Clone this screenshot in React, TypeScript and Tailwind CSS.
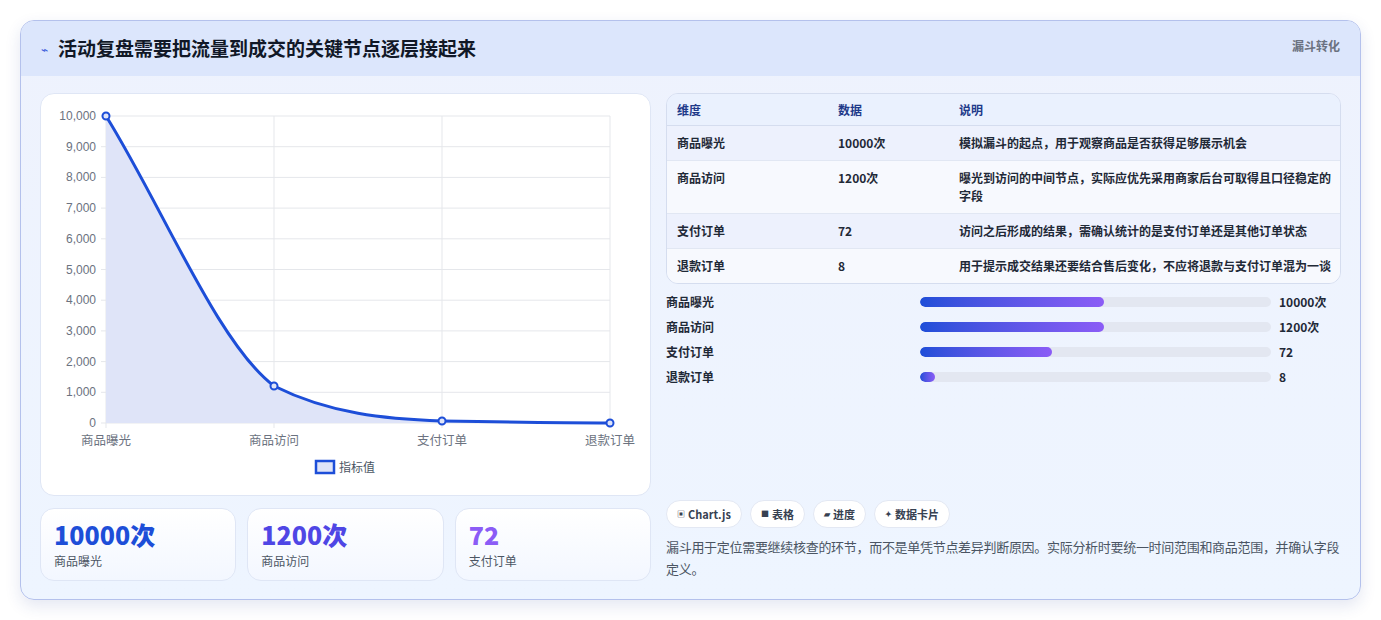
import React from "react";

const F = { fontFamily: '"Noto Sans CJK SC", "Noto Sans", sans-serif' };

const rows = [
  ["商品曝光", "10000次", "模拟漏斗的起点，用于观察商品是否获得足够展示机会"],
  ["商品访问", "1200次", "曝光到访问的中间节点，实际应优先采用商家后台可取得且口径稳定的字段"],
  ["支付订单", "72", "访问之后形成的结果，需确认统计的是支付订单还是其他订单状态"],
  ["退款订单", "8", "用于提示成交结果还要结合售后变化，不应将退款与支付订单混为一谈"],
];
const bars = [
  ["商品曝光", 52.5, "10000次"],
  ["商品访问", 52.5, "1200次"],
  ["支付订单", 37.6, "72"],
  ["退款订单", 4.2, "8"],
] as const;

function Chart() {
  const yl = ["10,000", "9,000", "8,000", "7,000", "6,000", "5,000", "4,000", "3,000", "2,000", "1,000", "0"];
  const top = 22, bot = 329, step = (bot - top) / 10;
  const xs = [65, 233, 401, 569];
  const xl = ["商品曝光", "商品访问", "支付订单", "退款订单"];
  const curve = "M65,22 C121,112 177,250 233,292 C289,320 345,325 401,327 C457,328 513,329 569,329";
  return (
    <svg width="610" height="402" className="block" style={F}>
      {yl.map((t, i) => (
        <g key={t}>
          <line x1={60} x2={569} y1={top + i * step} y2={top + i * step} stroke="#e5e7eb" />
          <text x={55} y={top + i * step + 4} textAnchor="end" fontSize="12" fill="#6b7280" fontFamily="Liberation Sans, sans-serif">{t}</text>
        </g>
      ))}
      {xs.map((x, i) => (
        <g key={x}>
          <line x1={x} x2={x} y1={top} y2={bot + 5} stroke="#e5e7eb" />
          <text x={x} y={351} textAnchor="middle" fontSize="12.5" fill="#6b7280">{xl[i]}</text>
        </g>
      ))}
      <path d={curve + " L569,329 L65,329 Z"} fill="#dfe4f8" />
      <path d={curve} fill="none" stroke="#1d4ed8" strokeWidth="3" />
      {[[65, 22], [233, 292], [401, 327], [569, 329]].map(([x, y]) => (
        <circle key={x} cx={x} cy={y} r="3.5" fill="#dfe4f8" stroke="#1d4ed8" strokeWidth="2" />
      ))}
      <rect x={275} y={367} width={18} height={12} fill="#dfe4f8" stroke="#1d4ed8" strokeWidth="2.5" />
      <text x={298} y={378} fontSize="12" fill="#4b5563">指标值</text>
    </svg>
  );
}

export default function App() {
  return (
    <div className="w-[1381px] h-[620px] bg-white pt-[20px] pl-[20px]" style={F}>
      <div className="w-[1341px] h-[580px] rounded-[14px] border border-[#b4c1ec] bg-gradient-to-b from-[#eef2fd] to-[#eef5ff] overflow-hidden shadow-[0_6px_16px_rgba(30,60,150,0.12)]">
        <div className="h-[55px] bg-[#dce6fc] flex items-center justify-between pl-[20px] pr-[20px]">
          <div className="flex items-center gap-[10px]">
            <span className="text-[#3b5bdb] text-[12px]">⌁</span>
            <span className="text-[19px] font-bold text-[#111827]">活动复盘需要把流量到成交的关键节点逐层接起来</span>
          </div>
          <span className="text-[12px] font-bold text-[#6b7280] self-start mt-[16px]">漏斗转化</span>
        </div>
        <div className="flex gap-[15px] px-[19px] pt-[17px]">
          <div className="w-[611px] flex flex-col gap-[12px]">
            <div className="h-[403px] bg-white rounded-[14px] border border-[#dfe6f5]">
              <Chart />
            </div>
            <div className="grid grid-cols-3 gap-[11px]">
              {[["10000次", "商品曝光", "text-[#1d4ed8]"], ["1200次", "商品访问", "text-[#4f46e5]"], ["72", "支付订单", "text-[#8b5cf6]"]].map(([v, l, c]) => (
                <div key={l} className="h-[73px] rounded-[14px] border border-[#dfe6f5] bg-gradient-to-b from-white to-[#f3f7ff] px-[13px] pt-[9px]">
                  <div className={`text-[25px] leading-[32px] font-extrabold ${c}`}>{v}</div>
                  <div className="text-[12px] text-[#4b5563] mt-[2px]">{l}</div>
                </div>
              ))}
            </div>
          </div>
          <div className="w-[676px] flex flex-col">
            <div className="rounded-[12px] border border-[#d5ddef] overflow-hidden text-[12px]">
              <div className="flex h-[32px] items-center bg-[#eaf1fe] border-b border-[#d5ddef] text-[#1e3a8a] font-bold">
                <div className="w-[171px] pl-[10px]">维度</div>
                <div className="w-[121px]">数据</div>
                <div className="flex-1">说明</div>
              </div>
              {rows.map((r, i) => (
                <div key={r[0]} className={`flex py-[8px] leading-[18px] text-[#1f2937] font-semibold ${i % 2 ? "bg-[#f7f9fe]" : "bg-[#edf1fd]"} ${i < 3 ? "border-b border-[#e1e7f3]" : ""}`}>
                  <div className="w-[171px] pl-[10px]">{r[0]}</div>
                  <div className="w-[121px]">{r[1]}</div>
                  <div className="flex-1 pr-[8px]">{r[2]}</div>
                </div>
              ))}
            </div>
            <div className="flex flex-col gap-[7px] mt-[9px]">
              {bars.map(([l, p, v]) => (
                <div key={l} className="flex items-center h-[18px] text-[12px] font-semibold text-[#1f2937]">
                  <div className="w-[254px]">{l}</div>
                  <div className="w-[351px] h-[10px] rounded-full bg-[#e3e7f1] overflow-hidden">
                    <div className="h-full rounded-full bg-gradient-to-r from-[#1d4ed8] to-[#8b5cf6]" style={{ width: `${p}%` }} />
                  </div>
                  <div className="pl-[8px] font-bold">{v}</div>
                </div>
              ))}
            </div>
            <div className="flex gap-[8px] mt-[114px]">
              {[["▣", "Chart.js"], ["■", "表格"], ["▰", "进度"], ["✦", "数据卡片"]].map(([i, t]) => (
                <span key={t} className="h-[28px] px-[10px] rounded-full bg-white border border-[#e3e8f3] flex items-center gap-[3px] text-[11px] font-bold text-[#374151]">
                  <span className="text-[8px]">{i}</span>{t}
                </span>
              ))}
            </div>
            <p className="mt-[8px] text-[13px] leading-[22px] tracking-[-0.3px] text-[#4b5563]">漏斗用于定位需要继续核查的环节，而不是单凭节点差异判断原因。实际分析时要统一时间范围和商品范围，并确认字段定义。</p>
          </div>
        </div>
      </div>
    </div>
  );
}
